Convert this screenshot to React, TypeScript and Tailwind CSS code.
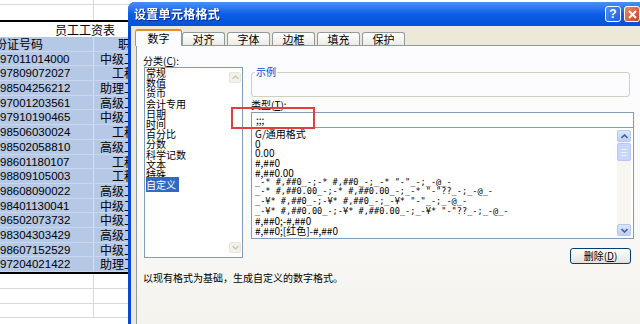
import React from 'react'

const rows: [string, string][] = [
  ["97011014000", "中级工程师"],
  ["97809072027", "工程师"],
  ["98504256212", "助理工程师"],
  ["97001203561", "高级工程师"],
  ["97910190465", "中级工程师"],
  ["98506030024", "工程师"],
  ["98502058810", "高级工程师"],
  ["98601180107", "工程师"],
  ["98809105003", "工程师"],
  ["98608090022", "高级工程师"],
  ["98401130041", "中级工程师"],
  ["96502073732", "中级工程师"],
  ["98304303429", "高级工程师"],
  ["98607152529", "中级工程师"],
  ["97204021422", "助理工程师"],
]

const categories = ["常规", "数值", "货币", "会计专用", "日期", "时间", "百分比", "分数", "科学记数", "文本", "特殊", "自定义"]

const formats = [
  "G/通用格式",
  "0",
  "0.00",
  "#,##0",
  "#,##0.00",
  '_-* #,##0_-;-* #,##0_-;_-* "-"_-;_-@_-',
  '_-* #,##0.00_-;-* #,##0.00_-;_-* "-"??_-;_-@_-',
  '_-¥* #,##0_-;-¥* #,##0_-;_-¥* "-"_-;_-@_-',
  '_-¥* #,##0.00_-;-¥* #,##0.00_-;_-¥* "-"??_-;_-@_-',
  "#,##0;-#,##0",
  "#,##0;[红色]-#,##0",
]

const tabs = ["对齐", "字体", "边框", "填充", "保护"]

function Sheet() {
  return (
    <div className="w-[640px] font-['Noto_Sans_CJK_SC',sans-serif] text-black">
      {/* blank rows above the table */}
      <div className="flex h-[5px] border-b border-[#d9d9d9]">
        <div className="w-[94px] border-r border-[#d9d9d9]" />
      </div>
      <div className="flex h-[15px]">
        <div className="w-[94px] border-r border-[#d9d9d9]" />
      </div>
      <div className="h-[2px] bg-black" />

      {/* title */}
      <div className="h-[15px] pl-[55px] text-[12px] leading-[15px]">员工工资表</div>

      {/* header */}
      <div className="flex h-[14.7px] bg-[#b5c8e6] border-b border-[#cad7ec] text-[12px] leading-[14px]">
        <div className="w-[94px] border-r border-[#d3def0] overflow-hidden whitespace-nowrap">
          <span className="-ml-[17px]">身份证号码</span>
        </div>
        <div className="w-[72px] text-center">职称</div>
      </div>

      {/* data */}
      {rows.map(([id, title], i) => (
        <div key={i} className="flex h-[14.7px] bg-[#b5c8e6] border-b border-[#cad7ec] leading-[14px]">
          <div className="w-[94px] border-r border-[#d3def0] font-['Liberation_Sans',sans-serif] text-[11.5px] whitespace-nowrap">{id}</div>
          <div className="w-[72px] text-center text-[12px] whitespace-nowrap">{title}</div>
        </div>
      ))}
      <div className="h-[2px] bg-black" />

      {/* empty rows below */}
      {[0, 1, 2].map(i => (
        <div key={i} className="flex h-[14.8px] border-b border-[#d9d9d9]">
          <div className="w-[94px] border-r border-[#d9d9d9]" />
        </div>
      ))}
    </div>
  )
}

function ScrollBtn({ up }: { up?: boolean }) {
  return (
    <div className="h-[12px] rounded-[2px] border border-[#b6c9f4] bg-gradient-to-b from-[#dbe6fd] to-[#bccffb] flex items-center justify-center">
      <svg width="7" height="5" viewBox="0 0 7 5">
        <path d={up ? "M0.5 4 L3.5 1 L6.5 4" : "M0.5 1 L3.5 4 L6.5 1"} fill="none" stroke="#4d6185" strokeWidth="1.6" />
      </svg>
    </div>
  )
}

function DisabledBtn({ up }: { up?: boolean }) {
  return (
    <div className="h-[11px] rounded-[2px] border border-[#e8e6dc] bg-[#f2f1ea] flex items-center justify-center">
      <svg width="7" height="5" viewBox="0 0 7 5">
        <path d={up ? "M0.5 4 L3.5 1 L6.5 4" : "M0.5 1 L3.5 4 L6.5 1"} fill="none" stroke="#c9c7ba" strokeWidth="1.4" />
      </svg>
    </div>
  )
}

function Dialog() {
  return (
    <div className="absolute left-[128px] top-[2px] w-[520px] h-[330px] flex flex-col rounded-t-[7px] bg-[#0847d0] font-['Noto_Sans_CJK_SC',sans-serif]">
      {/* title bar */}
      <div className="h-[24px] shrink-0 rounded-t-[7px] bg-gradient-to-b from-[#4a8ff8] via-[#0a5fe6] to-[#0552d6] flex items-center justify-between pl-[6px] pr-[8px]">
        <span className="text-white font-bold text-[12px] tracking-[0.3px] drop-shadow-[1px_1px_0_#0a2a8a]">设置单元格格式</span>
        <div className="flex gap-[3px]">
          <div className="w-[16px] h-[16px] rounded-[3px] border border-white bg-gradient-to-br from-[#4f8ef7] to-[#1f5fe0] flex items-center justify-center text-white font-bold text-[12px] leading-none font-['Liberation_Sans',sans-serif]">?</div>
          <div className="w-[16px] h-[16px] rounded-[3px] border border-white bg-gradient-to-br from-[#e98a63] to-[#c8421c] flex items-center justify-center">
            <svg width="9" height="9" viewBox="0 0 9 9">
              <path d="M1 1 L8 8 M8 1 L1 8" stroke="white" strokeWidth="2" />
            </svg>
          </div>
        </div>
      </div>

      {/* body */}
      <div className="flex-1 mx-[3px] bg-[#ece9d8] pl-[5px] pr-[3px] pt-[3px] flex flex-col">
        {/* tabs */}
        <div className="h-[16px] flex items-end relative z-10 text-[11px]">
          <div className="-ml-[1px] w-[47px] h-[17px] -mb-[1px] rounded-t-[3px] border border-b-0 border-[#919b9c] border-t-[#e68b2c] border-t-[2px] bg-[#fcfcfe] flex items-center justify-center">数字</div>
          {tabs.map((t, i) => (
            <div key={i} className="w-[43px] mr-[2px] h-[13px] rounded-t-[3px] border border-b-0 border-[#919b9c] bg-gradient-to-b from-[#ffffff] to-[#ecebe6] flex items-center justify-center leading-none">{t}</div>
          ))}
        </div>

        {/* panel */}
        <div className="relative flex-1 border border-[#919b9c] bg-gradient-to-b from-[#fcfcfe] via-[#fbfbfb] to-[#f3f2ec] pl-[6px] pt-[9px] text-[10px] text-black">
          <div className="flex">
            {/* category */}
            <div className="w-[100px]">
              <div className="h-[12px] leading-[12px]">分类(<span className="underline">C</span>):</div>
              <div className="ml-[1px] h-[191px] border border-[#7f9db9] bg-white flex">
                <div className="flex-1 leading-[10.2px] pl-[1px]">
                  {categories.map((c, i) => (
                    <div key={i}>
                      <span className={i === categories.length - 1 ? "bg-[#316ac5] text-white pr-[3px]" : ""}>{c}</span>
                    </div>
                  ))}
                </div>
                <div className="w-[13px] flex flex-col justify-between py-[4px] pr-[1px]">
                  <DisabledBtn up />
                  <DisabledBtn />
                </div>
              </div>
            </div>

            {/* right side */}
            <div className="ml-[8px] w-[383px] flex flex-col">
              <fieldset className="mt-[11px] h-[31px] w-[379px] border border-[#d0d0bf] rounded-[3px] px-[3px]">
                <legend className="px-[1px] text-[#0046d5] leading-[12px]">示例</legend>
              </fieldset>
              <div className="mt-[2px] h-[13px] leading-[12px]">类型(<span className="underline">T</span>):</div>
              <div className="h-[16px] border border-[#7f9db9] bg-white pl-[4px] leading-[14px]">;;;</div>
              <div className="-mt-[1px] h-[112px] border border-[#7f9db9] bg-white flex">
                <div className="flex-1 pl-[3px] pt-[1px] leading-[9.7px] whitespace-nowrap">
                  {formats.map((f, i) => (
                    <div key={i} className={i >= 5 && i <= 8 ? "font-['DejaVu_Sans_Mono',monospace] text-[8.6px]" : "text-[10px]"}>{f}</div>
                  ))}
                </div>
                <div className="w-[14px] mr-[2px] my-[2px] bg-[#f7f6f1] flex flex-col">
                  <ScrollBtn up />
                  <div className="h-[18px] mt-[1px] rounded-[2px] border border-[#b6c9f4] bg-[#c6d6fc] flex flex-col items-center justify-center gap-[2px]">
                    <div className="w-[6px] h-px bg-[#eef3fe]" />
                    <div className="w-[6px] h-px bg-[#eef3fe]" />
                    <div className="w-[6px] h-px bg-[#eef3fe]" />
                  </div>
                  <div className="flex-1" />
                  <ScrollBtn />
                </div>
              </div>
              <div className="self-end mr-[3px] mt-[9px] w-[61px] h-[16px] rounded-[3px] border border-[#003c74] bg-gradient-to-b from-[#ffffff] to-[#e3e2da] flex items-center justify-center leading-none">
                删除(<span className="underline">D</span>)
              </div>
            </div>
          </div>
          <div className="mt-[8px] leading-[12px]">以现有格式为基础，生成自定义的数字格式。</div>

          {/* red annotation box */}
          <div className="absolute left-[94px] top-[61px] w-[84px] h-[22px] border-2 border-[#e0403c]" />
        </div>
      </div>
    </div>
  )
}

export default function App() {
  return (
    <div className="relative w-[640px] h-[324px] overflow-hidden bg-white">
      <Sheet />
      <Dialog />
    </div>
  )
}
